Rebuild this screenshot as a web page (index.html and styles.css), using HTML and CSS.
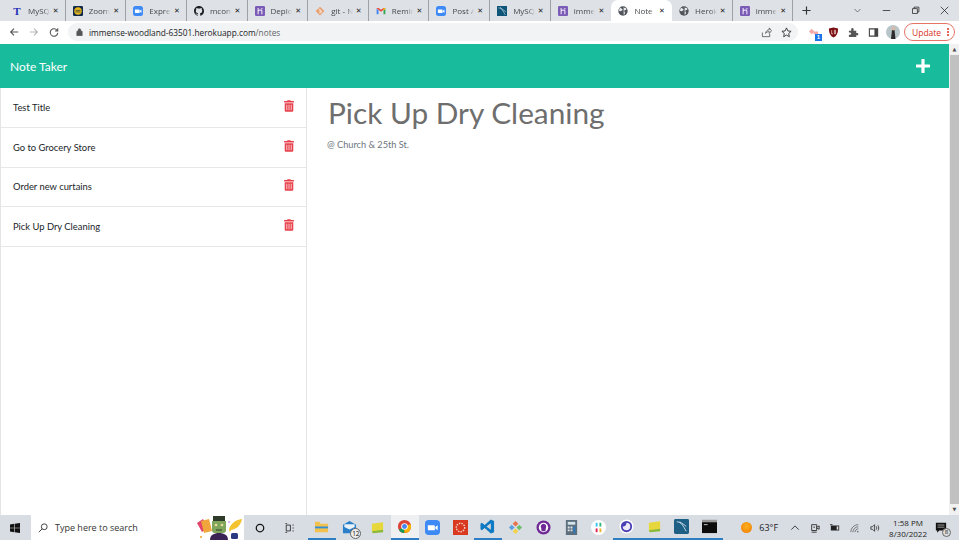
FILE: index.html
```html
<!DOCTYPE html>
<html lang="en">
<head>
	<meta charset="UTF-8">
	<title>Note Taker</title>
	<link rel="stylesheet" href="styles.css">
</head>
<body>
	<!-- browser tabs -->
	<div class="tabstrip">
		<div class="tab"><span class="fav fav_t">T</span><span class="tab_title">MySQ</span><span class="tab_x">&#10005;</span></div>
		<div class="tab"><svg class="fav" viewBox="0 0 16 16"><rect width="16" height="16" rx="2" fill="#10284a"/><circle cx="8" cy="8" r="6" fill="#e8b71a"/><path d="M4 7h8M4 9.500h8" stroke="#10284a" stroke-width="1"/></svg><span class="tab_title">Zoom</span><span class="tab_x">&#10005;</span></div>
		<div class="tab"><svg class="fav" viewBox="0 0 16 16"><rect width="16" height="16" rx="4" fill="#3d8af7"/><path d="M3 5.500h6.500a1 1 0 0 1 1 1V11H4a1 1 0 0 1-1-1zM11 7.500l2.500-2v5.500L11 9z" fill="#fff"/></svg><span class="tab_title">Expres</span><span class="tab_x">&#10005;</span></div>
		<div class="tab"><svg class="fav" viewBox="0 0 16 16"><path fill="#1b1f23" d="M8 0C3.580 0 0 3.580 0 8c0 3.540 2.290 6.530 5.470 7.590.4.070.55-.17.55-.38 0-.19-.01-.82-.01-1.490-2.010.37-2.530-.49-2.690-.94-.09-.23-.48-.94-.82-1.130-.28-.15-.68-.52-.01-.53.630-.01 1.080.58 1.230.82.720 1.210 1.870.87 2.330.66.070-.52.280-.87.510-1.070-1.780-.2-3.640-.89-3.640-3.950 0-.87.310-1.590.820-2.150-.08-.2-.36-1.020.08-2.120 0 0 .67-.21 2.200.82.640-.18 1.320-.27 2-.27s1.360.09 2 .27c1.530-1.040 2.200-.82 2.200-.82.440 1.100.16 1.920.08 2.120.51.56.82 1.270.82 2.150 0 3.070-1.870 3.750-3.650 3.950.29.250.54.730.54 1.480 0 1.070-.01 1.930-.01 2.200 0 .21.150.46.550.38A8.010 8.010 0 0 0 16 8c0-4.420-3.580-8-8-8z"/></svg><span class="tab_title">mcon</span><span class="tab_x">&#10005;</span></div>
		<div class="tab"><svg class="fav" viewBox="0 0 16 16"><use href="#heroku"/></svg><span class="tab_title">Deplo</span><span class="tab_x">&#10005;</span></div>
		<div class="tab"><svg class="fav" viewBox="0 0 16 16"><path d="M8 1l7 7-7 7-7-7z" fill="#e8a070"/><path d="M6 4l4 4v3M8 6v6" stroke="#fff" stroke-width="1.200" fill="none"/></svg><span class="tab_title">git - N</span><span class="tab_x">&#10005;</span></div>
		<div class="tab"><svg class="fav" viewBox="0 0 16 16"><path d="M1 4v9h3V7z" fill="#4285f4"/><path d="M12 7v6h3V4z" fill="#34a853"/><path d="M1 3.500 8 9l7-5.500V3h-3L8 6 4 3H1z" fill="#ea4335"/><path d="M12 3h3v1l-3 3z" fill="#fbbc04"/></svg><span class="tab_title">Remin</span><span class="tab_x">&#10005;</span></div>
		<div class="tab"><svg class="fav" viewBox="0 0 16 16"><rect width="16" height="16" rx="4" fill="#3d8af7"/><path d="M3 5.500h6.500a1 1 0 0 1 1 1V11H4a1 1 0 0 1-1-1zM11 7.500l2.500-2v5.500L11 9z" fill="#fff"/></svg><span class="tab_title">Post A</span><span class="tab_x">&#10005;</span></div>
		<div class="tab"><svg class="fav" viewBox="0 0 16 16"><rect width="16" height="16" fill="#0f5578"/><path d="M2 3c5 0 8 5 11 11M5 2c3 3 6 5 9 7" stroke="#cfe3ee" stroke-width="1" fill="none"/></svg><span class="tab_title">MySQ</span><span class="tab_x">&#10005;</span></div>
		<div class="tab tab_before_active"><svg class="fav" viewBox="0 0 16 16"><use href="#heroku"/></svg><span class="tab_title">immer</span><span class="tab_x">&#10005;</span></div>
		<div class="tab tab_active"><svg class="fav" viewBox="0 0 16 16"><use href="#globe"/></svg><span class="tab_title">Note</span><span class="tab_x">&#10005;</span></div>
		<div class="tab"><svg class="fav" viewBox="0 0 16 16"><use href="#globe"/></svg><span class="tab_title">Herok</span><span class="tab_x">&#10005;</span></div>
		<div class="tab"><svg class="fav" viewBox="0 0 16 16"><use href="#heroku"/></svg><span class="tab_title">immer</span><span class="tab_x">&#10005;</span></div>
		<svg class="newtab" viewBox="0 0 10 10"><path d="M5 .500v9M.500 5h9" stroke="#333" stroke-width="1.300"/></svg>
		<div class="winctl">
			<svg viewBox="0 0 12 12"><path d="M2 4l4 4 4-4" fill="none" stroke="#555" stroke-width="1"/></svg>
			<svg viewBox="0 0 12 12"><path d="M1 6h10" stroke="#222" stroke-width="1"/></svg>
			<svg viewBox="0 0 12 12"><path d="M2 3.500h6.500V10H2zM4 3.500V1.500h6.500V8H8.500" fill="none" stroke="#222" stroke-width="1"/></svg>
			<svg viewBox="0 0 12 12"><path d="M1 1l10 10M11 1L1 11" stroke="#222" stroke-width="1"/></svg>
		</div>
	</div>

	<!-- address bar -->
	<div class="toolbar">
		<svg class="nav" viewBox="0 0 12 12"><path d="M11 6H2M6 2L2 6l4 4" fill="none" stroke="#555" stroke-width="1.300"/></svg>
		<svg class="nav" viewBox="0 0 12 12"><path d="M1 6h9M6 2l4 4-4 4" fill="none" stroke="#b5b5b5" stroke-width="1.300"/></svg>
		<svg class="nav" viewBox="0 0 12 12"><path d="M10 4.500A4.500 4.500 0 1 0 10.500 7M10.500 1.500v3.300H7.200" fill="none" stroke="#555" stroke-width="1.300"/></svg>
		<div class="omnibox">
			<svg class="lock" viewBox="0 0 10 12"><path d="M1 5h8v6.500H1zM3 5V3.300a2 2 0 0 1 4 0V5" fill="#555" stroke="#555"/></svg>
			<span class="url">immense-woodland-63501.herokuapp.com<span class="url_path">/notes</span></span>
			<svg class="omni_icon omni_share" viewBox="0 0 12 12"><path d="M1.500 6v4.500h8V7.500M5 7c.3-2.500 2-4 4-4V1l2.500 3L9 7V5C7.500 5 6 5.500 5 7z" fill="none" stroke="#555" stroke-width=".9"/></svg>
			<svg class="omni_icon" viewBox="0 0 12 12"><path d="M6 1l1.500 3.300 3.500.4-2.600 2.400.7 3.500L6 8.800l-3.100 1.800.7-3.500L1 4.700l3.500-.4z" fill="none" stroke="#333" stroke-width="1"/></svg>
		</div>
		<div class="ext ext_pink"><svg viewBox="0 0 12 12"><path d="M1 5l3-3 3 3-3 3zM6 5h5v3H6z" fill="#f4a8a8"/></svg><span class="ext_badge">1</span></div>
		<svg class="ext" viewBox="0 0 12 12"><path d="M1 1.500 6 .5l5 1c0 5-1.500 8.500-5 10-3.500-1.500-5-5-5-10z" fill="#7a0f12"/><path d="M4 3.500v4h1.500M7 3.500h1.200v4H7z" stroke="#f3d3d3" fill="none" stroke-width=".8"/></svg>
		<svg class="ext" viewBox="0 0 12 12"><path d="M1 4h2.500V2.500a1.300 1.300 0 0 1 2.600 0V4H9v2.500h1a1.300 1.300 0 0 1 0 2.600H9V11H1V8.500h1a1.300 1.300 0 0 0 0-2.600H1z" fill="#555"/></svg>
		<svg class="ext" viewBox="0 0 12 12"><path d="M1.500 2h9v8h-9z" fill="none" stroke="#444" stroke-width="1.200"/><path d="M7 2h3.500v8H7z" fill="#444"/></svg>
		<svg class="avatar" viewBox="0 0 14 14"><circle cx="7" cy="7" r="7" fill="#b9c6c9"/><path d="M5 14l1-9h2.500l1 9z" fill="#2c2a2c"/><circle cx="7.500" cy="3.500" r="2" fill="#d8b8a8"/></svg>
		<div class="update"><span>Update</span><i class="dots"></i></div>
	</div>

	<!-- the page -->
	<div class="window">
		<div class="app">
			<div class="navbar">
				<a class="brand">Note Taker</a>
				<svg class="plus" viewBox="0 0 14 14"><path d="M7 1v12M1 7h12" stroke="#fff" stroke-width="3.200" stroke-linecap="round"/></svg>
			</div>
			<div class="content">
				<ul class="list">
					<li class="item"><span>Test Title</span><svg class="trash" viewBox="0 0 448 512"><use href="#trash"/></svg></li>
					<li class="item"><span>Go to Grocery Store</span><svg class="trash" viewBox="0 0 448 512"><use href="#trash"/></svg></li>
					<li class="item"><span>Order new curtains</span><svg class="trash" viewBox="0 0 448 512"><use href="#trash"/></svg></li>
					<li class="item"><span>Pick Up Dry Cleaning</span><svg class="trash" viewBox="0 0 448 512"><use href="#trash"/></svg></li>
				</ul>
				<div class="note">
					<div class="note_title">Pick Up Dry Cleaning</div>
					<div class="note_text">@ Church &amp; 25th St.</div>
				</div>
			</div>
		</div>
		<div class="scrollbar">
			<div class="sb_arrow">&#9650;</div>
			<div class="sb_thumb"></div>
			<div class="sb_arrow">&#9660;</div>
		</div>
	</div>

	<!-- windows taskbar -->
	<div class="taskbar">
		<svg class="start" viewBox="0 0 12 12"><path d="M0 1.700 5 1v4.700H0zM5.700.9 12 0v5.700H5.700zM0 6.300h5V11l-5-.7zM5.700 6.300H12V12l-6.300-.9z" fill="#111"/></svg>
		<div class="search">
			<svg class="search_icon" viewBox="0 0 12 12"><path d="M7.500 1a3.500 3.500 0 1 1 0 7 3.500 3.500 0 0 1 0-7zM5 7l-4 4" fill="none" stroke="#222" stroke-width="1"/></svg>
			<span>Type here to search</span>
			<svg class="frank" viewBox="0 0 48 25">
				<path d="M1 8l6-4 5 9-6 4z" fill="#e2446a"/>
				<path d="M5 6l8-2 3 12-8 2z" fill="#f0a63a"/>
				<circle cx="5" cy="22" r="1" fill="#f5a623"/>
				<path d="M14 25c0-5 4-7 9-7s9 2 9 7z" fill="#3a2454"/>
				<path d="M17 4h12v2h1v9a3 3 0 0 1-3 3h-8a3 3 0 0 1-3-3V6h1z" fill="#7fa65a"/>
				<path d="M17 1h12v5H17z" fill="#2e3a2a"/>
				<circle cx="20" cy="10" r="1.300" fill="#ead9a0"/><circle cx="26" cy="10" r="1.300" fill="#ead9a0"/>
				<path d="M20 15h6" stroke="#2e3a2a" stroke-width="1"/>
				<path d="M33 6l1 1-1 1-1-1z" fill="#c46be0"/>
				<path d="M33 15c1-6 6-10 13-11-1 6-5 10-11 11l-1 2z" fill="#f4c430"/>
				<rect x="35" y="18" width="7" height="6" rx="1.500" fill="#2b3a80"/>
			</svg>
		</div>
		<svg class="tb_sys tb_cortana" viewBox="0 0 12 12"><circle cx="6" cy="6" r="4.500" fill="none" stroke="#111" stroke-width="1.500"/></svg>
		<svg class="tb_sys" viewBox="0 0 12 12"><path d="M1.500 2.500h5v7h-5zM9 2.500h1.500M9 6h1.500M9 9.500h1.500M.5.800h2M.5 11.200h2" fill="none" stroke="#222" stroke-width="1"/></svg>
		<div class="apps">
			<div class="app_btn on"><svg viewBox="0 0 16 16"><path d="M1 3h5l1 2h8v9H1z" fill="#f2c14e"/><path d="M1 8h14v2H1z" fill="#2f8fd8"/></svg></div>
			<div class="app_btn"><svg viewBox="0 0 16 16"><path d="M1 5l7-4 7 4v9H1z" fill="#2a80c8"/><path d="M2.500 4.500h11v3L8 10 2.500 7.500z" fill="#eaf2fa"/></svg><span class="app_count">12</span></div>
			<div class="app_btn"><svg viewBox="0 0 16 16"><path d="M2 4l12-1.500V11l-12 1.500z" fill="#e6d83c"/><path d="M2 12l12-1.500V13L3 14z" fill="#8ab93a"/></svg></div>
			<div class="app_btn on light"><svg viewBox="0 0 16 16"><circle cx="8" cy="8" r="7" fill="#db4437"/><path d="M8 8L2 11.500A7 7 0 0 0 8 15z" fill="#0f9d58"/><path d="M8 8l6.500-2.600A7 7 0 0 1 8 15z" fill="#f4b400"/><circle cx="8" cy="8" r="3.500" fill="#fff"/><circle cx="8" cy="8" r="2.600" fill="#4285f4"/></svg></div>
			<div class="app_btn"><svg viewBox="0 0 16 16"><rect width="16" height="16" rx="4" fill="#3d8af7"/><path d="M3 5.500h6.500a1 1 0 0 1 1 1V11H4a1 1 0 0 1-1-1zM11 7.500l2.500-2v5.500L11 9z" fill="#fff"/></svg></div>
			<div class="app_btn"><svg viewBox="0 0 16 16"><rect width="16" height="16" fill="#d93a1f"/><circle cx="8" cy="8" r="4.500" fill="none" stroke="#f7d0c8" stroke-width="1.500" stroke-dasharray="1.500 1.200"/></svg></div>
			<div class="app_btn on"><svg viewBox="0 0 16 16"><path d="M11.500 0.500 15 2v12l-3.500 1.500L5 9.500 2 12 .5 11V5L2 4l3 2.500z" fill="#0f7ac4"/><path d="M11.500 4.500v7L7 8z" fill="#d8d8d8"/></svg></div>
			<div class="app_btn"><svg viewBox="0 0 16 16"><path d="M5 4l3-3 3 3-3 3z" fill="#e8734a"/><path d="M1 8l3-3 3 3-3 3z" fill="#5aa0e0"/><path d="M9 8l3-3 3 3-3 3z" fill="#6bbf6b"/><path d="M5 12l3-3 3 3-3 3z" fill="#f2d24a"/></svg></div>
			<div class="app_btn"><svg viewBox="0 0 16 16"><circle cx="8" cy="8" r="7.500" fill="#6e2b96"/><circle cx="8" cy="8" r="5" fill="#fff"/><path d="M8 4a3 3 0 0 1 2.500 4.600L10 12H6l-.5-3.400A3 3 0 0 1 8 4z" fill="#6e2b96"/></svg></div>
			<div class="app_btn"><svg viewBox="0 0 16 16"><rect x="2" width="12" height="16" fill="#5d6f7c"/><rect x="4" y="2" width="8" height="3" fill="#d6e4ec"/><path d="M4 7h2v2H4zM7 7h2v2H7zM4 10h2v2H4zM7 10h2v2H7z" fill="#dfe6ea"/><path d="M10 7h2v7h-2z" fill="#2a7ac0"/></svg></div>
			<div class="app_btn"><svg viewBox="0 0 16 16"><circle cx="8" cy="8" r="8" fill="#fff"/><path d="M5 3h2v4H5z" fill="#36c5f0"/><path d="M9 3h2v4H9z" fill="#2eb67d"/><path d="M5 9h2v4H5z" fill="#e01e5a"/><path d="M9 9h2v4H9z" fill="#ecb22e"/></svg></div>
			<div class="app_btn on"><svg viewBox="0 0 16 16"><circle cx="8" cy="8" r="7.500" fill="#fff"/><circle cx="8" cy="8" r="6" fill="#4a3fb5"/><path d="M8 4a4 4 0 0 1 0 8 4 4 0 0 1-4-4c2 .5 4-1.500 4-4z" fill="#efeaf8"/></svg></div>
			<div class="app_btn on"><svg viewBox="0 0 16 16"><path d="M2 4l12-1.500V11l-12 1.500z" fill="#e6d83c"/><path d="M2 12l12-1.500V13L3 14z" fill="#8ab93a"/></svg></div>
			<div class="app_btn on"><svg viewBox="0 0 16 16"><rect width="16" height="16" rx="1.500" fill="#1e5f86"/><path d="M3 3c5 0 7 5 10 10M6 3c3 2 5 3 7 5" stroke="#d3e3ec" stroke-width="1" fill="none"/></svg></div>
			<div class="app_btn on"><svg viewBox="0 0 16 16"><rect y="1" width="16" height="14" fill="#0c0c0c"/><rect y="1" width="16" height="2.500" fill="#9a9a9a"/><path d="M2 6h4" stroke="#ccc" stroke-width="1"/></svg></div>
		</div>
		<div class="tray">
			<i class="sun"></i>
			<span class="temp">63°F</span>
			<svg class="tray_icon chev" viewBox="0 0 12 12"><path d="M1.500 8L6 3.500 10.500 8" fill="none" stroke="#222" stroke-width="1"/></svg>
			<svg class="tray_icon" viewBox="0 0 12 12"><path d="M2 2h6v7H2zM2 11h6M8 5l3-1.500v4L8 6M4 5h2" fill="none" stroke="#222" stroke-width="1"/></svg>
			<svg class="tray_icon" viewBox="0 0 12 12"><path d="M1 3h10v6H1z" fill="#222"/><path d="M0 2h3" stroke="#222"/><path d="M8 4h2v4H8z" fill="#ddd"/></svg>
			<svg class="tray_icon" viewBox="0 0 12 12"><path d="M1 11c0-5 4-9 9-9M3.500 11c0-3.500 3-6.500 6.500-6.500M6 11c0-2 2-4 4-4" fill="none" stroke="#555" stroke-width=".9"/><path d="M8.500 11c0-1 .7-1.500 1.500-1.500V11z" fill="#333"/></svg>
			<svg class="tray_icon" viewBox="0 0 12 12"><path d="M1 4.500h2L5.500 2v8L3 7.500H1zM7.500 4c.8 1.300.8 2.700 0 4M9.500 2.800c1.300 2 1.300 4.400 0 6.400" fill="none" stroke="#222" stroke-width=".9"/></svg>
			<div class="clock"><div>1:58 PM</div><div>8/30/2022</div></div>
			<div class="notif"><svg viewBox="0 0 14 14"><path d="M1 1h12v9H5l-2.500 2.500V10H1z" fill="#111"/><path d="M3 3.500h8M3 6h8" stroke="#ddd" stroke-width=".8"/></svg><span class="notif_n">8</span></div>
		</div>
	</div>

	<svg class="defs" width="0" height="0">
		<defs>
			<g id="trash"><path fill="currentColor" d="M32 464a48 48 0 0 0 48 48h288a48 48 0 0 0 48-48V128H32zm272-256a16 16 0 0 1 32 0v224a16 16 0 0 1-32 0zm-96 0a16 16 0 0 1 32 0v224a16 16 0 0 1-32 0zm-96 0a16 16 0 0 1 32 0v224a16 16 0 0 1-32 0zM432 32H312l-9.400-18.700A24 24 0 0 0 281.100 0H166.800a23.700 23.700 0 0 0-21.400 13.300L136 32H16A16 16 0 0 0 0 48v32a16 16 0 0 0 16 16h416a16 16 0 0 0 16-16V48a16 16 0 0 0-16-16z"/></g>
			<g id="heroku"><rect width="16" height="16" rx="2" fill="#7a5bb5"/><path d="M5 3v10M5 8c2-2 6-2 6 0v5M11 3v2" stroke="#efe9f8" stroke-width="1.700" fill="none"/></g>
			<g id="globe"><circle cx="8" cy="8" r="7.500" fill="#50565c"/><path d="M3 3c2 0 3 1 4 2s-1 2-2 3-3-1-4 0M9 1c0 2 2 2 3 2s2 2 1 3-3 0-3 2 2 2 1 4-2 2-2 2" fill="#e8eaed" stroke="none"/></g>
		</defs>
	</svg>
</body>
</html>
```

FILE: styles.css
```css
*{
	margin: 0;
	padding: 0;
	box-sizing: border-box;
}
html,body{
	height: 100%;
	overflow: hidden;
}
body{
	display: flex;
	flex-direction: column;
	width: 959px;
	height: 540px;
	font-family: "Open Sans", "Liberation Sans", sans-serif;
	background: #fff;
}
svg{
	display: block;
	flex: none;
}
.defs{
	position: absolute;
}

/* tabs */
.tabstrip{
	display: flex;
	align-items: center;
	height: 21px;
	padding-left: 5px;
	background: #dee1e6;
}
.tab{
	display: flex;
	align-items: center;
	width: 60.650px;
	height: 21px;
	padding: 0 4px 0 7px;
	border-right: 1px solid #9ea1a6;
	flex: none;
}
.tab_before_active{
	border-right-color: transparent;
}
.tab_active{
	background: #fff;
	border-right-color: transparent;
	border-radius: 7px 7px 0 0;
}
.fav{
	width: 10px;
	height: 10px;
	margin-right: 6px;
	flex: none;
}
.fav_t{
	font: bold 11px/10px "Liberation Serif", serif;
	color: #2530b8;
	text-align: center;
}
.tab_title{
	flex: 1;
	min-width: 0;
	overflow: hidden;
	white-space: nowrap;
	font-size: 8px;
	color: #45484c;
	-webkit-mask-image: linear-gradient(to right, #000 70%, transparent);
	mask-image: linear-gradient(to right, #000 70%, transparent);
}
.tab_x{
	flex: none;
	width: 8px;
	margin-left: 3px;
	font: 7px/8px "DejaVu Sans", sans-serif;
	color: #222;
}
.newtab{
	width: 9px;
	height: 9px;
	margin-left: 9px;
}
.winctl{
	display: flex;
	align-items: center;
	margin-left: auto;
	padding-right: 10px;
	gap: 20px;
}
.winctl svg{
	width: 9px;
	height: 9px;
}

/* address bar */
.toolbar{
	display: flex;
	align-items: center;
	height: 23px;
	padding: 2px 0 3px 9px;
	background: #fff;
}
.nav{
	width: 10px;
	height: 10px;
	margin-right: 10px;
}
.omnibox{
	display: flex;
	align-items: center;
	width: 730px;
	height: 18px;
	margin-left: -1px;
	padding: 0 6px 0 8px;
	border-radius: 9px;
	background: #f1f3f4;
	font-size: 8.300px;
}
.lock{
	width: 7px;
	height: 8px;
	margin-right: 6px;
}
.url{
	color: #202124;
	white-space: nowrap;
}
.url_path{
	color: #5f6368;
}
.omni_icon{
	width: 11px;
	height: 11px;
	margin-left: 9px;
}
.omni_share{
	margin-left: auto;
}
.ext{
	width: 11px;
	height: 11px;
	margin-left: 9px;
}
.ext_pink{
	position: relative;
	margin-left: 10px;
}
.ext_pink svg{
	width: 11px;
	height: 11px;
}
.ext_badge{
	position: absolute;
	right: -3px;
	bottom: -3px;
	width: 7px;
	height: 7px;
	background: #1a73e8;
	color: #fff;
	font: bold 6px/7px "Liberation Sans", sans-serif;
	text-align: center;
}
.avatar{
	width: 14px;
	height: 14px;
	margin-left: 7px;
}
.update{
	display: flex;
	align-items: center;
	justify-content: space-between;
	width: 51px;
	height: 18px;
	margin-left: 4px;
	padding: 0 5px 0 7px;
	border: 1px solid #e57368;
	border-radius: 9px;
	color: #d93025;
	font-size: 8.500px;
}
.dots{
	width: 2px;
	height: 2px;
	background: #d93025;
	border-radius: 50%;
	box-shadow: 0 -3px 0 #d93025, 0 3px 0 #d93025;
}

/* page */
.window{
	flex: 1;
	display: flex;
	min-height: 0;
}
.app{
	flex: 1;
	display: flex;
	flex-direction: column;
	font-family: Lato, "Liberation Sans", sans-serif;
}
.navbar{
	display: flex;
	align-items: center;
	justify-content: space-between;
	height: 44px;
	padding: 0 19px 0 10px;
	background: #18bc9c;
}
.brand{
	color: #fff;
	font-size: 12px;
}
.plus{
	width: 14px;
	height: 14px;
}
.content{
	flex: 1;
	display: flex;
	min-height: 0;
}
.list{
	width: 307px;
	list-style: none;
	border-left: 1px solid #e4e4e4;
	border-right: 1px solid #e4e4e4;
}
.item{
	display: flex;
	align-items: center;
	justify-content: space-between;
	height: 39.750px;
	padding: 0 12px;
	border-bottom: 1px solid #e7e7e7;
	color: #212529;
	font-size: 9.400px;
}
.trash{
	width: 10px;
	height: 12px;
	margin-top: -3px;
	color: #e8404a;
}
.note{
	flex: 1;
	padding: 5px 21px;
	color: #6c757d;
}
.note_title{
	font-size: 29.800px;
	line-height: 40px;
	margin-bottom: 5px;
	color: #6e6e6e;
}
.note_text{
	font-size: 9.200px;
	line-height: 13px;
	margin-left: -1px;
}
.scrollbar{
	display: flex;
	flex-direction: column;
	width: 10px;
	padding-left: 1px;
	background: #f1f1f1;
}
.sb_arrow{
	height: 11px;
	font: 5px/11px "DejaVu Sans", sans-serif;
	color: #505050;
	text-align: center;
}
.sb_thumb{
	flex: 1;
	background: #c1c1c1;
}

/* taskbar */
.taskbar{
	display: flex;
	align-items: center;
	height: 25px;
	background: #d8dde3;
	font-family: "Open Sans", "Liberation Sans", sans-serif;
}
.start{
	width: 10px;
	height: 10px;
	margin: 0 11px 0 10px;
}
.search{
	display: flex;
	align-items: center;
	width: 213px;
	height: 25px;
	padding-left: 7px;
	background: #fff;
	color: #333;
	font-size: 9px;
}
.search_icon{
	width: 10px;
	height: 10px;
	margin-right: 7px;
}
.frank{
	width: 48px;
	height: 25px;
	margin-left: auto;
}
.tb_sys{
	width: 10px;
	height: 10px;
	margin-left: 20px;
}
.tb_cortana{
	margin-left: 11px;
}
.apps{
	display: flex;
	height: 25px;
	margin-left: 13px;
}
.app_btn{
	position: relative;
	display: flex;
	align-items: center;
	justify-content: center;
	width: 27.700px;
	height: 25px;
}
.app_btn svg{
	width: 15px;
	height: 15px;
}
.app_btn.on{
	border-bottom: 2px solid #2d7dc4;
}
.app_btn.light{
	background: #eef0f2;
}
.app_count{
	position: absolute;
	right: 2px;
	bottom: 1px;
	width: 11px;
	height: 11px;
	border: 1px solid #666;
	border-radius: 50%;
	background: #eee;
	color: #111;
	font-size: 6.500px;
	line-height: 9px;
	text-align: center;
}
.tray{
	display: flex;
	align-items: center;
	margin-left: auto;
	padding-right: 3px;
	color: #222;
	font-size: 9px;
}
.sun{
	width: 11px;
	height: 11px;
	border-radius: 50%;
	background: radial-gradient(circle at 50% 40%, #ffb020, #ee7a00);
}
.temp{
	margin-left: 7px;
	margin-right: 12px;
}
.tray_icon{
	width: 10px;
	height: 10px;
	margin-right: 10px;
}
.clock{
	margin-left: -1px;
	font-size: 8px;
	line-height: 11px;
	text-align: center;
}
.notif{
	position: relative;
	margin-left: 8px;
	margin-right: 9px;
}
.notif svg{
	width: 12px;
	height: 12px;
}
.notif_n{
	position: absolute;
	right: -4px;
	bottom: -3px;
	width: 9px;
	height: 9px;
	border: 1px solid #666;
	border-radius: 50%;
	background: #ddd;
	font-size: 6px;
	line-height: 7px;
	text-align: center;
}
```
